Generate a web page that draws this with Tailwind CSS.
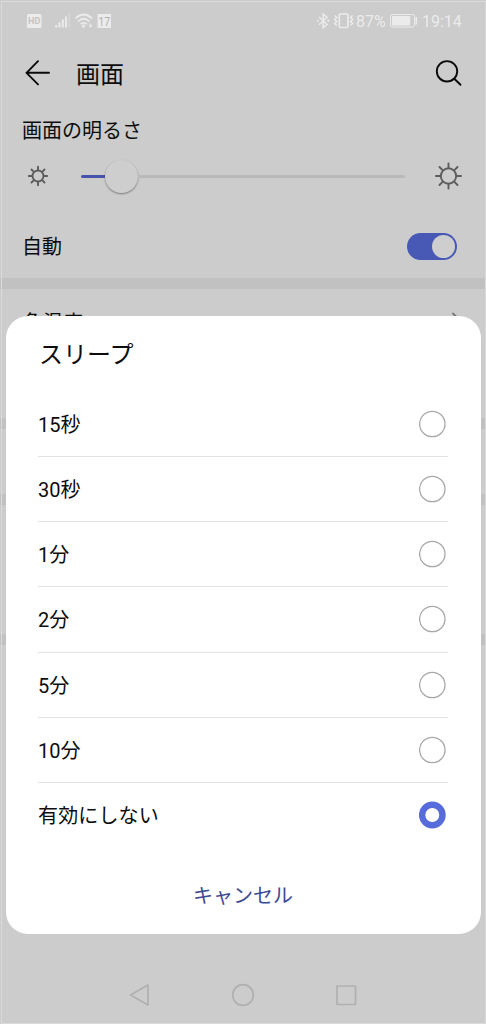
<!DOCTYPE html>
<html lang="ja">
<head>
<meta charset="utf-8">
<title>画面</title>
<script src="https://cdn.jsdelivr.net/npm/@tailwindcss/browser@4"></script>
</head>
<body class="relative w-[486px] h-[1024px] overflow-hidden bg-[#cccccc] text-[#0d0d0d] font-[Roboto,'Noto_Sans_CJK_JP',sans-serif] text-[20px] leading-[30px]">
<div class="flex flex-col h-full">
  <div class="flex items-center justify-between h-[41px] pl-[27px] pr-[24px] text-[#ebebeb] shrink-0">
    <svg width="86" height="20" viewBox="27 11 86 20" fill="none" stroke="currentColor">
      <rect x="27" y="14" width="14.500" height="14" rx="1.500" fill="currentColor" stroke="none"/>
      <text x="34.200" y="24.300" text-anchor="middle" font-family="Roboto" font-size="9" font-weight="700" fill="#c4c4c4" stroke="none">HD</text>
      <path d="M56.200 25v2.500M59.500 22.500v5M62.800 19.500v8M66 16.500v11" stroke-width="2"/>
      <path d="M69.300 13.500v14" stroke="#d6d6d6" stroke-width="1.700"/>
      <path d="M75.500 18.300Q83.700 10.700 92 18.300M78 21.500Q83.700 16 89.400 21.500M80.500 24.200Q83.700 21.500 86.800 24.200" stroke-width="1.700"/>
      <circle cx="83.500" cy="26" r="1.600" fill="currentColor" stroke="none"/>
      <path d="M89.500 23.500l3 2.200-3 2.200z" fill="currentColor" stroke="none"/>
      <rect x="97.500" y="14" width="13.500" height="14" fill="currentColor" stroke="none"/>
      <text x="104.200" y="25.500" text-anchor="middle" font-family="Roboto" font-size="12.500" textLength="11.500" lengthAdjust="spacingAndGlyphs" fill="#b2b2b2" stroke="none">17</text>
    </svg>
    <div class="flex items-center h-5 text-[16px] leading-5">
      <svg width="38" height="20" viewBox="316 11 38 20" fill="none" stroke="currentColor" stroke-width="1.500">
        <path d="M319 17l8 7.500-3.800 3.200V14l3.800 3.200-8 7.500"/>
        <path d="M317.300 20.800h1.400M327.300 20.800h2" stroke-width="2"/>
        <rect x="339.300" y="14" width="8.700" height="13.500" rx="1.200" stroke-width="1.700"/>
        <path d="M334.700 15.500l2 2-2 2 2 2-2 2 2 2M352.600 15.500l-2 2 2 2-2 2 2 2-2 2" stroke-width="1.600"/>
      </svg>
      <span class="ml-[2px] w-[30px] pt-[2px]">87%</span>
      <svg class="ml-[3px]" width="30" height="20" viewBox="389 11 30 20">
        <rect x="390.500" y="14.500" width="24" height="12.500" rx="2" fill="none" stroke="currentColor"/>
        <rect x="392" y="16" width="18.300" height="9.500" fill="currentColor"/>
        <path d="M416.300 17v7.500" stroke="currentColor" stroke-width="1.700"/>
      </svg>
      <span class="ml-[3px] w-[40px] pt-[2px]">19:14</span>
    </div>
  </div>
  <div class="flex items-center h-[64px] pl-[25px] pr-[24px] shrink-0">
    <svg width="26" height="26" viewBox="0 0 26 26" fill="none" stroke="#0a0a0a" stroke-width="1.900" stroke-linecap="round" stroke-linejoin="round"><path d="M24 12.800H1.500M13 1.200L1.500 12.800 13 24.400"/></svg>
    <h1 class="ml-[25px] pt-[3px] text-[24px] leading-9">画面</h1>
    <svg class="ml-auto" width="27" height="28" viewBox="0 0 27 28" fill="none" stroke="#0a0a0a" stroke-width="1.900" stroke-linecap="round"><circle cx="12" cy="12.300" r="10.200"/><path d="M19.300 19.800L25.500 25.800"/></svg>
  </div>
  <div class="pl-[22px] h-[50px] pt-[11px] shrink-0">画面の明るさ</div>
  <div class="flex items-center h-[42px] pl-[27px] pr-[24px] shrink-0">
    <svg width="22" height="22" viewBox="-11 -11 22 22" fill="none" stroke="#5d5d5d" stroke-width="1.900" stroke-linecap="round"><circle r="5.500"/><path d="M0-6v-3.200M0 6v3.200M-6 0h-3.200M6 0h3.200M-4.200-4.200l-2.300-2.300M4.200 4.200l2.300 2.300M-4.200 4.200l-2.300 2.300M4.200-4.200l2.300-2.300"/></svg>
    <div class="flex items-center ml-[32px] w-[324px]">
      <div class="w-[24px] h-[3px] bg-[#4653ac] rounded-l-full"></div>
      <div class="size-[33px] rounded-full bg-[#cecece] shadow-[0_1px_2px_rgba(0,0,0,0.4)]"></div>
      <div class="flex-1 h-[3px] bg-[#b9b9b9] rounded-r-full"></div>
    </div>
    <svg class="ml-auto" width="28" height="28" viewBox="-14.500 -14 28 28" fill="none" stroke="#5d5d5d" stroke-width="1.900" stroke-linecap="round"><circle r="7.700"/><path d="M0-8v-4.500M0 8v4.500M-8 0h-4.500M8 0h4.500M-5.700-5.700l-3.300-3.300M5.700 5.700l3.300 3.300M-5.700 5.700l-3.300 3.300M5.700-5.700l3.300-3.300"/></svg>
  </div>
  <div class="flex items-center justify-between h-[81px] pl-[22px] pr-[29px] pt-[17px] shrink-0">
    <span class="pt-px">自動</span>
    <div class="flex items-center justify-end w-[50px] h-[27px] rounded-full bg-[#4858b5] pr-[2px]"><div class="size-[23px] rounded-full bg-[#cecece]"></div></div>
  </div>
  <div class="h-[11px] bg-[#c1c1c1] shrink-0"></div>
  <div class="flex items-start justify-between h-[129px] pl-[23px] pr-[26px] pt-[18px] shrink-0">
    <span class="mt-[1px]">色温度</span>
    <svg class="mt-[4px]" width="8" height="16" viewBox="0 0 8 16" fill="none" stroke="#777" stroke-width="1.800" stroke-linecap="round"><path d="M1 2.500l6 6-6 6"/></svg>
  </div>
  <div class="h-[11px] bg-[#c1c1c1] shrink-0"></div>
  <div class="h-[65px] shrink-0"></div>
  <div class="h-[11px] bg-[#c1c1c1] shrink-0"></div>
  <div class="h-[129px] shrink-0"></div>
  <div class="h-[11px] bg-[#c1c1c1] shrink-0"></div>
  <div class="flex-1"></div>
  <div class="flex justify-center items-center h-[58px] shrink-0">
    <svg width="230" height="26" viewBox="128 982 230 26" fill="none" stroke="#b0b0b0" stroke-width="1.700" stroke-linejoin="round"><path d="M148 985v20l-17.500-10z"/><circle cx="243" cy="995" r="10.300"/><rect x="337" y="986" width="18.500" height="18.500" rx=".5"/></svg>
  </div>
</div>
<div class="absolute inset-0 border-t border-l border-r border-b border-[#dadada] mt-px ml-px pointer-events-none"></div>
<div role="dialog" class="absolute left-[6px] top-[316px] w-[475px] h-[618px] rounded-[22px] bg-white pl-[32px] pr-[33px] flex flex-col">
  <h2 class="text-[24px] leading-9 pt-[21px] pl-[1px] h-[76px] shrink-0">スリープ</h2>
  <div class="flex items-center justify-between h-[65.150px] border-b border-[#e3e3e3] pr-[1px]"><span class="pt-[2px]">15秒</span><svg width="28" height="28" viewBox="0 0 28 28"><circle cx="13.300" cy="14" r="12.700" fill="none" stroke="#a8a8a8" stroke-width="1.300"/></svg></div>
  <div class="flex items-center justify-between h-[65.150px] border-b border-[#e3e3e3] pr-[1px]"><span class="pt-[2px]">30秒</span><svg width="28" height="28" viewBox="0 0 28 28"><circle cx="13.300" cy="14" r="12.700" fill="none" stroke="#a8a8a8" stroke-width="1.300"/></svg></div>
  <div class="flex items-center justify-between h-[65.150px] border-b border-[#e3e3e3] pr-[1px]"><span class="pt-[2px]">1分</span><svg width="28" height="28" viewBox="0 0 28 28"><circle cx="13.300" cy="14" r="12.700" fill="none" stroke="#a8a8a8" stroke-width="1.300"/></svg></div>
  <div class="flex items-center justify-between h-[65.150px] border-b border-[#e3e3e3] pr-[1px]"><span class="pt-[2px]">2分</span><svg width="28" height="28" viewBox="0 0 28 28"><circle cx="13.300" cy="14" r="12.700" fill="none" stroke="#a8a8a8" stroke-width="1.300"/></svg></div>
  <div class="flex items-center justify-between h-[65.150px] border-b border-[#e3e3e3] pr-[1px]"><span class="pt-[2px]">5分</span><svg width="28" height="28" viewBox="0 0 28 28"><circle cx="13.300" cy="14" r="12.700" fill="none" stroke="#a8a8a8" stroke-width="1.300"/></svg></div>
  <div class="flex items-center justify-between h-[65.150px] border-b border-[#e3e3e3] pr-[1px]"><span class="pt-[2px]">10分</span><svg width="28" height="28" viewBox="0 0 28 28"><circle cx="13.300" cy="14" r="12.700" fill="none" stroke="#a8a8a8" stroke-width="1.300"/></svg></div>
  <div class="flex items-center justify-between h-[65.150px] pr-[1px]"><span class="pt-[1px] tracking-[0.15px]">有効にしない</span><svg width="28" height="28" viewBox="0 0 28 28"><circle cx="13.300" cy="14" r="10.200" fill="none" stroke="#586bda" stroke-width="6.400"/></svg></div>
  <button class="mt-[33px] text-center text-[#3c4a91]">キャンセル</button>
</div>
</body>
</html>
